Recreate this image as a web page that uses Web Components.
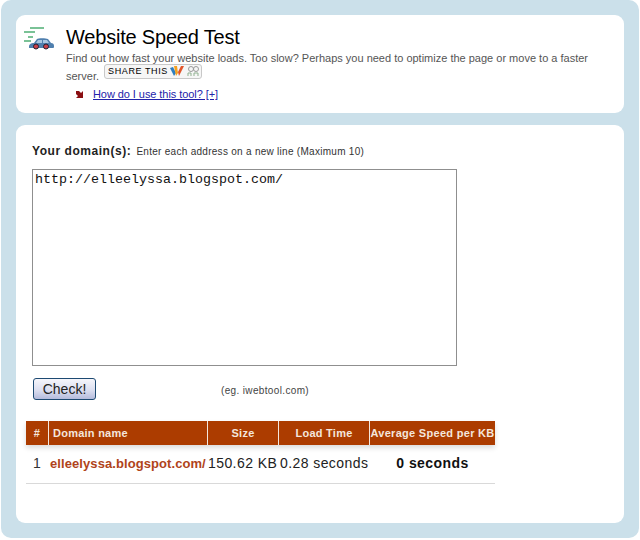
<!DOCTYPE html>
<html>
<head>
<meta charset="utf-8">
<title>Website Speed Test</title>
<style>
  html, body { margin: 0; padding: 0; background: #fff; }
  body { font-family: "Liberation Sans", Arial, sans-serif; }
</style>
</head>
<body>
<tool-frame>
  <tool-card style="height:98px">
    <tool-header></tool-header>
  </tool-card>
  <tool-card style="height:398px">
    <speed-form></speed-form>
    <speed-results></speed-results>
  </tool-card>
</tool-frame>

<script>
// Blue rounded frame round the two cards
class ToolFrame extends HTMLElement {
  constructor() {
    super();
    this.attachShadow({ mode: 'open' });
    this.shadowRoot.innerHTML = `
      <style>
        :host {
          display: flex;
          flex-direction: column;
          gap: 12px;
          box-sizing: border-box;
          width: 638px;
          height: 538px;
          margin-left: 1px;
          padding: 15px;
          background: #cbe0ea;
          border-radius: 10px;
        }
      </style>
      <slot></slot>
    `;
  }
}

class ToolCard extends HTMLElement {
  constructor() {
    super();
    this.attachShadow({ mode: 'open' });
    this.shadowRoot.innerHTML = `
      <style>
        :host {
          display: block;
          box-sizing: border-box;
          background: #fff;
          border-radius: 9px;
        }
      </style>
      <slot></slot>
    `;
  }
}

class ToolHeader extends HTMLElement {
  constructor() {
    super();
    this.attachShadow({ mode: 'open' });
    this.shadowRoot.innerHTML = `
      <style>
        :host {
          display: grid;
          grid-template-columns: 32px 1fr;
          column-gap: 10px;
          padding: 11px 16px 0 8px;
        }
        .car { width: 32px; height: 24px; }
        h1 {
          margin: 0;
          font-size: 20px;
          line-height: 23px;
          font-weight: normal;
          color: #000;
          letter-spacing: -0.2px;
        }
        p {
          margin: 0;
          font-size: 11px;
          line-height: 18px;
          color: #555;
        }
        .share {
          display: inline-flex;
          align-items: center;
          gap: 2px;
          box-sizing: border-box;
          height: 15px;
          margin: -6px 0 0 2px;
          padding: 0 1px 0 3px;
          vertical-align: 6px;
          border: 1px solid #c8c8c8;
          border-radius: 3px;
          background: #f6f6f6;
          font-size: 9px;
          color: #000;
          letter-spacing: 0.6px;
        }
        .help {
          display: flex;
          align-items: center;
          gap: 9px;
          margin: 3px 0 0 10px;
          font-size: 11px;
          letter-spacing: -0.07px;
        }
        a { color: #2222aa; }
      </style>
      <svg class="car" viewBox="0 0 32 24">
        <path d="M6 2h14M0 6h11M4 11h5M0 15h7" stroke="#4fae74" stroke-width="1.500" fill="none"/>
        <path d="M5 21c0-3 2-4 5-4l3-4c1-1 9-1 11 0l3 4c2 0 3 1 3 3v1c0 1-1 1-2 1H6c-1 0-1 0-1-1z" fill="#4f7fae"/>
        <path d="M14 14h4v3h-6zM19 14h4l2 3h-6z" fill="#a9c8e2"/>
        <circle cx="12" cy="20.500" r="2.500" fill="#c9404a" stroke="#223" stroke-width="1"/>
        <circle cx="22" cy="20.500" r="2.500" fill="#c9404a" stroke="#223" stroke-width="1"/>
      </svg>
      <div>
        <h1>Website Speed Test</h1>
        <p><span>Find out how fast your website loads. Too slow? Perhaps you need to optimize the page or move to a faster</span> <span>server.</span>
          <span class="share">SHARE THIS
            <svg width="15" height="12" viewBox="0 0 15 12">
              <path d="M0 3l3-1 3 6-2 3z" fill="#2f7fc0"/>
              <path d="M4 1l3 0 1 7-2 3z" fill="#f4a020"/>
              <path d="M8 7l3-6 3 0-5 10z" fill="#e2552a"/>
            </svg>
            <svg width="13" height="12" viewBox="0 0 13 12" fill="none" stroke="#9a9a9a">
              <circle cx="4" cy="4" r="2.500"/><circle cx="9" cy="4" r="2.500"/>
              <path d="M1 11V8h3v3M7 11V8h4v3" stroke="#8fb08f"/>
            </svg>
          </span>
        </p>
        <div class="help">
          <svg width="8" height="7" viewBox="0 0 8 7"><path d="M0 0h3l2 2 2-2v7H0l2-2-2-2z" fill="#8a0f12"/></svg>
          <a href="#">How do I use this tool? [+]</a>
        </div>
      </div>
    `;
  }
}

class SpeedForm extends HTMLElement {
  constructor() {
    super();
    this.attachShadow({ mode: 'open' });
    this.shadowRoot.innerHTML = `
      <style>
        :host {
          display: block;
          padding: 18px 0 0 16px;
        }
        .label { font-size: 10px; line-height: 16px; color: #333; letter-spacing: 0.28px; }
        b { font-size: 12px; color: #222; letter-spacing: 0.55px; margin-right: 2px; }
        textarea {
          display: block;
          box-sizing: border-box;
          width: 425px;
          height: 197px;
          margin: 9px 0 12px;
          padding: 3px 2px;
          border: 1px solid #8f8f8f;
          border-radius: 0;
          outline: 0;
          resize: none;
          overflow: hidden;
          font: 13.33px/14px "Liberation Mono", "Courier New", monospace;
          color: #111;
          background: #fff;
        }
        .actions { display: flex; align-items: center; gap: 125px; padding-left: 1px; }
        button {
          box-sizing: border-box;
          width: 63px;
          height: 22px;
          padding: 0;
          border: 1px solid #1d4a72;
          border-radius: 3px;
          background: linear-gradient(#f6f6fb, #dcdff0 55%, #b4bbdc);
          font: 14px "Liberation Sans", Arial, sans-serif;
          color: #222;
        }
        small { margin-top: 2px; font-size: 10px; color: #444; letter-spacing: 0.35px; }
      </style>
      <div class="label"><b>Your domain(s):</b> Enter each address on a new line (Maximum 10)</div>
      <textarea spellcheck="false">http://elleelyssa.blogspot.com/</textarea>
      <div class="actions">
        <button type="button">Check!</button>
        <small>(eg. iwebtool.com)</small>
      </div>
    `;
  }
}

class SpeedResults extends HTMLElement {
  constructor() {
    super();
    this.attachShadow({ mode: 'open' });
    this.results = [
      { domain: 'elleelyssa.blogspot.com/', size: '150.62 KB', time: '0.28 seconds', average: '0 seconds' }
    ];
    this.shadowRoot.innerHTML = `
      <style>
        :host {
          display: block;
          width: 469px;
          margin: 21px 0 0 10px;
        }
        .row {
          display: grid;
          grid-template-columns: 23px 159px 71px 91px 125px;
        }
        .head {
          height: 24px;
          background: #ac3c00;
          box-shadow: 0 3px 5px rgba(0, 0, 0, 0.14);
          font-size: 11px;
          font-weight: bold;
          color: #f4e6dc;
          line-height: 24px;
          text-align: center;
          letter-spacing: 0.25px;
        }
        .head div { border-right: 1px solid #f4e6dc; white-space: nowrap; }
        .head div:last-child { border-right: 0; letter-spacing: 0.3px; }
        .head .name { text-align: left; padding-left: 4px; }
        .item {
          height: 38px;
          line-height: 37px;
          border-bottom: 1px solid #d9d9d9;
          font-size: 14px;
          color: #222;
          white-space: nowrap;
          letter-spacing: 0.42px;
        }
        .item div:first-child { padding-left: 7px; color: #333; }
        .item a {
          color: #b0431a;
          font-weight: bold;
          font-size: 13px;
          letter-spacing: 0.08px;
          text-decoration: none;
          margin-left: 1px;
        }
        .item .time { padding-left: 1px; }
        .item .avg { font-weight: bold; color: #111; text-align: center; }
      </style>
      <div class="row head">
        <div>#</div><div class="name">Domain name</div><div>Size</div><div>Load Time</div><div>Average Speed per KB</div>
      </div>
      ${this.results.map((r, i) => `
        <div class="row item">
          <div>${i + 1}</div>
          <div><a href="#">${r.domain}</a></div>
          <div>${r.size}</div>
          <div class="time">${r.time}</div>
          <div class="avg">${r.average}</div>
        </div>`).join('')}
    `;
  }
}

customElements.define('tool-frame', ToolFrame);
customElements.define('tool-card', ToolCard);
customElements.define('tool-header', ToolHeader);
customElements.define('speed-form', SpeedForm);
customElements.define('speed-results', SpeedResults);
</script>
</body>
</html>
